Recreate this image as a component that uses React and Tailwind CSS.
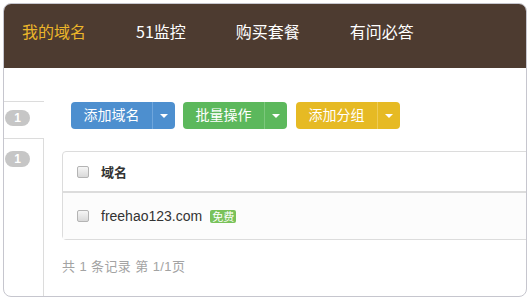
const navItems = ['我的域名', '51监控', '购买套餐', '有问必答']

function Caret() {
  return <span className="w-0 h-0 border-l-[4px] border-r-[4px] border-t-[4px] border-l-transparent border-r-transparent border-t-white" />
}

function SplitButton({ label, bg, line }) {
  return (
    <div className={`flex h-[27px] rounded-[4px] text-white text-[14px] ${bg}`}>
      <span className="w-[81px] flex items-center justify-center">{label}</span>
      <span className={`w-[23px] flex items-center justify-center border-l ${line}`}>
        <Caret />
      </span>
    </div>
  )
}

function Badge() {
  return (
    <span className="ml-px w-[25px] h-[16px] rounded-full bg-[#c6c6c6] text-white text-[12px] font-bold leading-[16px] flex items-center justify-center font-['Liberation_Sans',sans-serif]">
      1
    </span>
  )
}

function Checkbox() {
  return <span className="w-[12px] h-[12px] rounded-[2px] border border-[#b4b4b4] bg-gradient-to-b from-[#f6f6f6] to-[#d9d9d9] shrink-0" />
}

export default function App() {
  return (
    <div className="w-[530px] h-[300px] bg-white p-[3px] font-['Liberation_Sans','Noto_Sans_CJK_SC',sans-serif]">
      <div className="h-[294px] border border-[#c6c6ce] rounded-[8px] overflow-hidden flex flex-col">
        <header className="h-[64px] shrink-0 bg-[#4d3b30] flex items-center pb-[10px] pl-[18px] gap-[50px] text-[16px] font-['Noto_Sans_CJK_SC',sans-serif]">
          {navItems.map((n, i) => (
            <span key={n} className={i === 0 ? 'text-[#ebb52a]' : 'text-white'}>{n}</span>
          ))}
        </header>

        <div className="flex flex-1 min-h-0">
          <aside className="w-[40px] shrink-0 pt-[33px] flex flex-col">
            <div className="h-[37px] border-t border-[#dcdcdc] pt-[8px]">
              <Badge />
            </div>
            <div className="flex-1 border-t border-r border-[#dcdcdc] pt-[12px]">
              <Badge />
            </div>
          </aside>

          <main className="flex-1 min-w-0 pl-[18px] pt-[34px]">
            <div className="ml-[9px] flex gap-[8px]">
              <SplitButton label="添加域名" bg="bg-[#4d8fcf]" line="border-[#6fa6dc]" />
              <SplitButton label="批量操作" bg="bg-[#5cb85c]" line="border-[#7cc77c]" />
              <div className="ml-px">
                <SplitButton label="添加分组" bg="bg-[#e6ba24]" line="border-[#eecb55]" />
              </div>
            </div>

            <div className="mt-[22px] w-[520px] border border-[#dcdcdc] rounded-[4px] text-[#333]">
              <div className="h-[41px] border-b-2 border-[#dcdcdc] flex items-center pl-[14px] gap-[12px]">
                <Checkbox />
                <span className="text-[13px] font-bold font-['Noto_Sans_CJK_SC',sans-serif]">域名</span>
              </div>
              <div className="h-[46px] bg-[#fcfcfc] flex items-center pl-[14px] gap-[12px]">
                <Checkbox />
                <span className="text-[14px]">freehao123.com</span>
                <span className="-ml-[4px] h-[13px] px-[2px] rounded-[2px] bg-[#79c25a] text-white text-[11px] leading-[13px] font-['Noto_Sans_CJK_SC',sans-serif]">
                  免费
                </span>
              </div>
            </div>

            <p className="mt-[18px] text-[13px] leading-[18px] tracking-[0.4px] text-[#a3a3a3]">共 1 条记录 第 1/1页</p>
          </main>
        </div>
      </div>
    </div>
  )
}
